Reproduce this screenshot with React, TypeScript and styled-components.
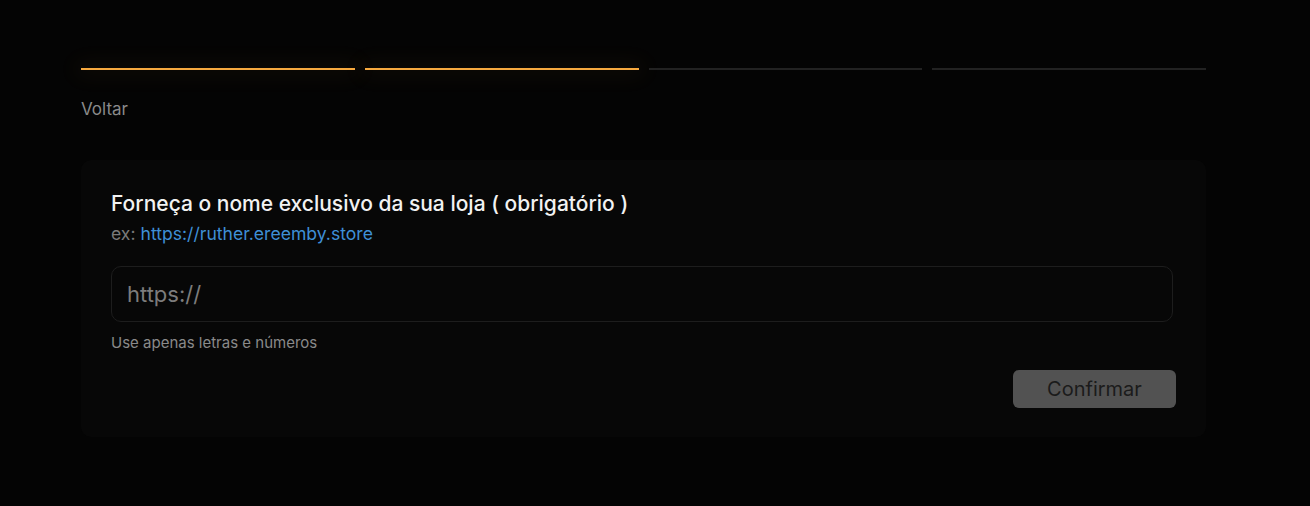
import React from "react";
import styled, { createGlobalStyle } from "styled-components";

const Global = createGlobalStyle`
  html, body { margin: 0; padding: 0; background: #040404; }
  body { font-family: Inter, "Noto Sans", sans-serif; color: #eee; }
`;

const Page = styled.div`
  min-height: 506px;
  padding: 68px 0 0 81px;
  box-sizing: border-box;
`;

const Wrap = styled.div`
  width: 1125px;
  display: flex;
  flex-direction: column;
`;

const Steps = styled.div`
  display: grid;
  grid-template-columns: repeat(4, 1fr);
  gap: 10px;
`;

const Step = styled.div<{ $active?: boolean }>`
  height: 2px;
  background: ${(p) => (p.$active ? "#f6a93f" : "#222222")};
  box-shadow: ${(p) => (p.$active ? "0 0 22px 6px rgba(246, 169, 63, 0.06)" : "none")};
`;

const Back = styled.div`
  margin-top: 27px;
  font-size: 17px;
  line-height: 25px;
  color: #8a8a8a;
`;

const Card = styled.div`
  margin-top: 38px;
  background: #070707;
  border-radius: 10px;
  padding: 30px 30px 29px 30px;
  display: flex;
  flex-direction: column;
`;

const Title = styled.div`
  font-size: 21px;
  line-height: 28px;
  font-weight: 500;
  color: #f2f2f2;
`;

const Example = styled.div`
  margin-top: 3px;
  font-size: 17.6px;
  line-height: 26px;
  color: #7a7a7a;
`;

const Link = styled.span`
  color: #3f8fd6;
`;

const Input = styled.input`
  margin-top: 19px;
  margin-right: 3px;
  height: 56px;
  box-sizing: border-box;
  border: 1px solid #1d1d1d;
  border-radius: 10px;
  background: #070707;
  padding: 0 15px;
  font-family: Inter, "Noto Sans", sans-serif;
  font-size: 22px;
  color: #ddd;
  outline: none;
  &::placeholder { color: #7c7c7c; }
`;

const Help = styled.div`
  margin-top: 10px;
  font-size: 15px;
  line-height: 21px;
  color: #8a8a8a;
`;

const Actions = styled.div`
  margin-top: 17px;
  display: flex;
  justify-content: flex-end;
`;

const Button = styled.button`
  width: 163px;
  height: 38px;
  border: none;
  border-radius: 6px;
  background: #525252;
  color: #1b1b1b;
  font-family: Inter, "Noto Sans", sans-serif;
  font-size: 20px;
  padding: 0;
`;

export default function App() {
  return (
    <>
      <Global />
      <Page>
        <Wrap>
          <Steps>
            <Step $active />
            <Step $active />
            <Step />
            <Step />
          </Steps>
          <Back>Voltar</Back>
          <Card>
            <Title>Forneça o nome exclusivo da sua loja ( obrigatório )</Title>
            <Example>
              ex: <Link>https://ruther.ereemby.store</Link>
            </Example>
            <Input placeholder="https://" />
            <Help>Use apenas letras e números</Help>
            <Actions>
              <Button>Confirmar</Button>
            </Actions>
          </Card>
        </Wrap>
      </Page>
    </>
  );
}
